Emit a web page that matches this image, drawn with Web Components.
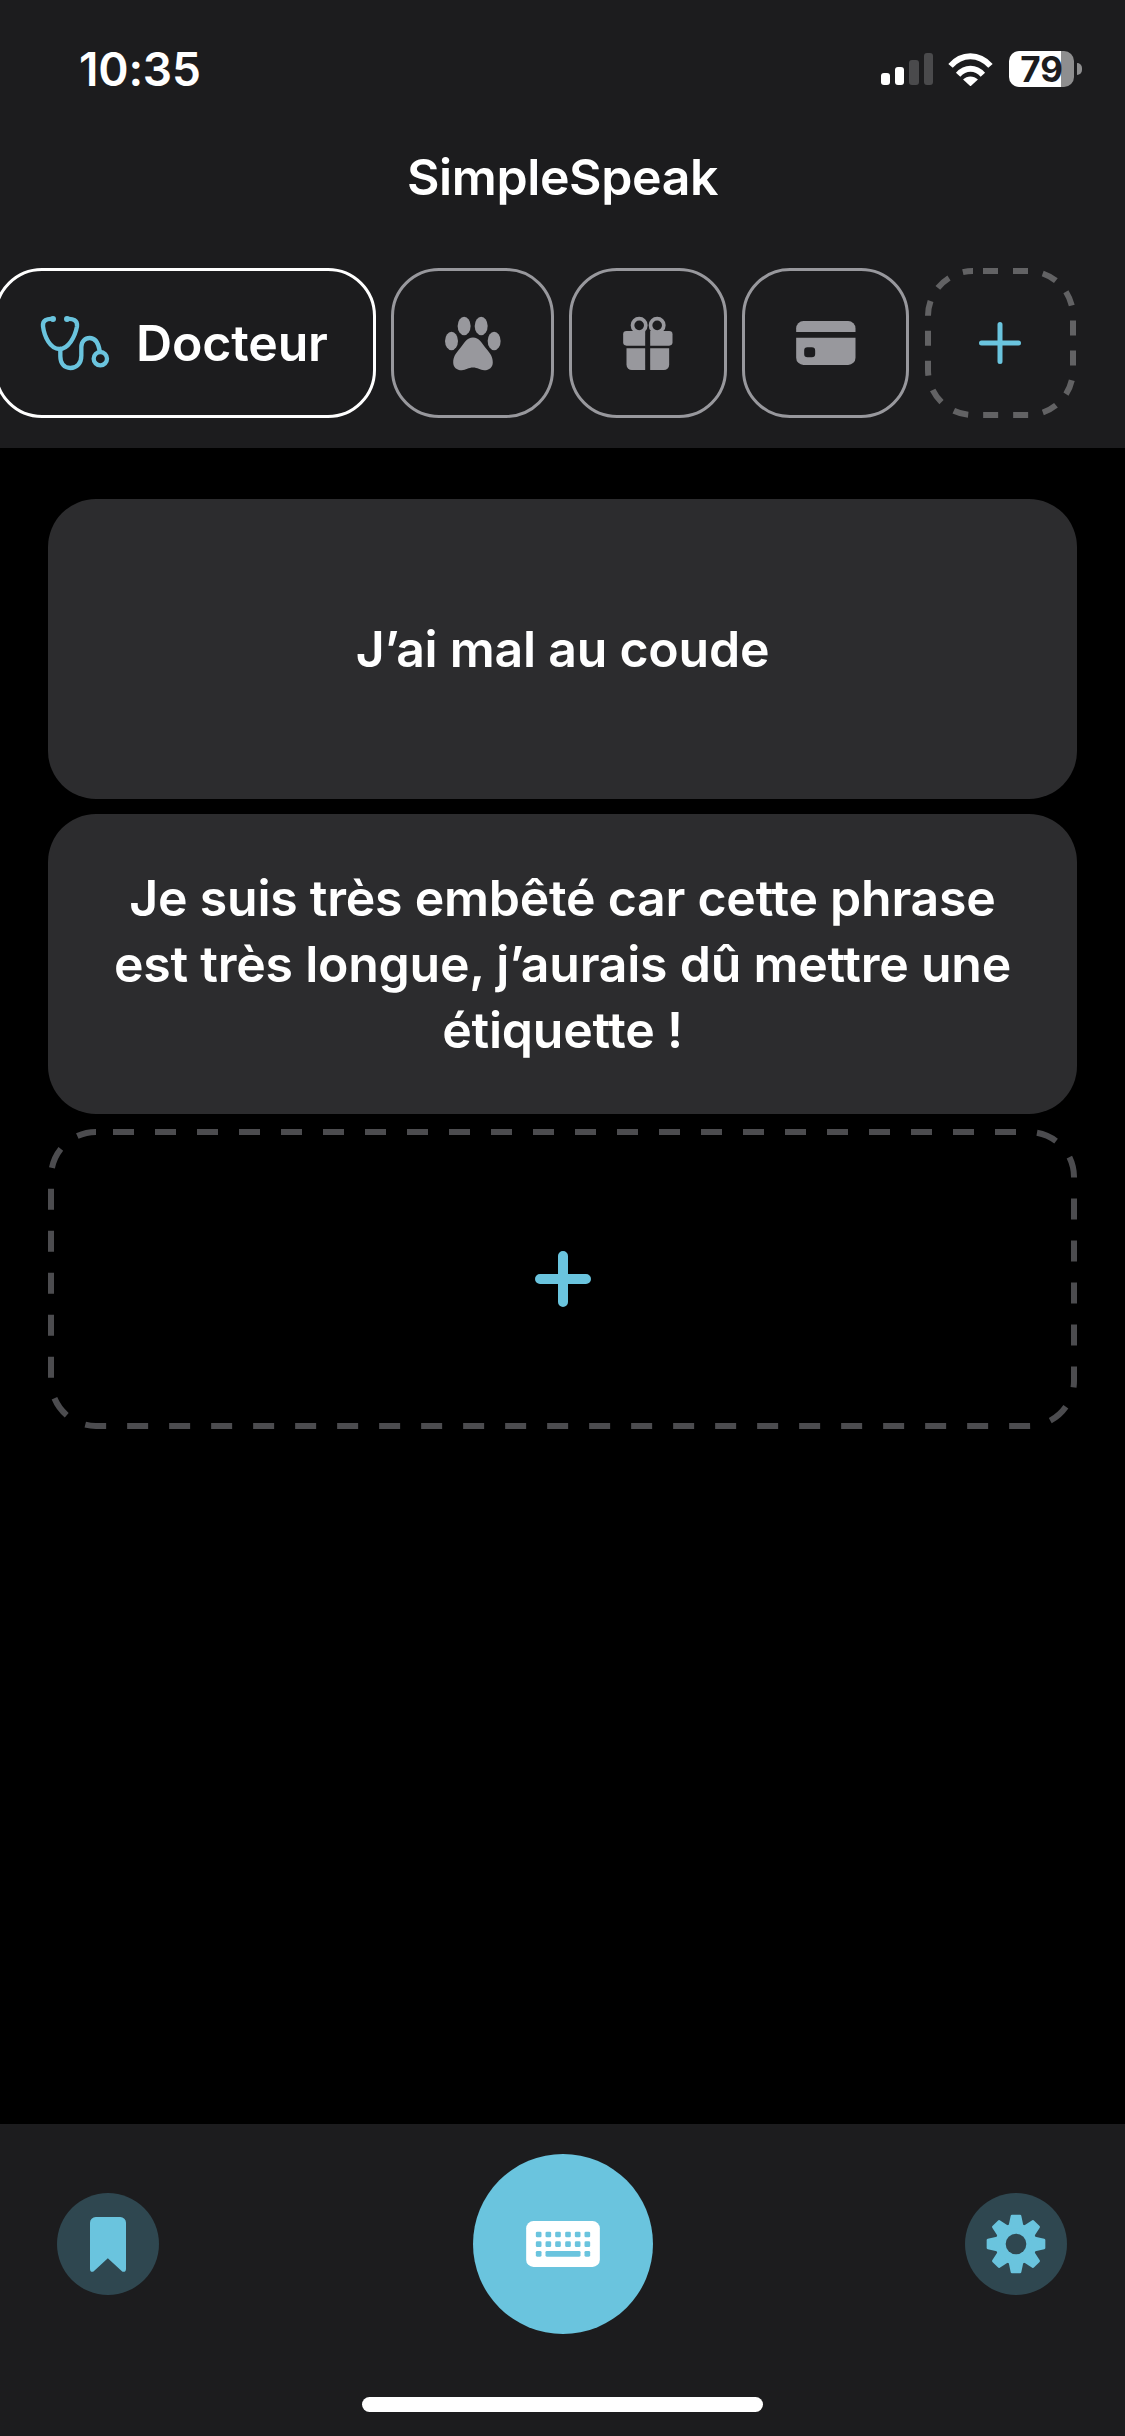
<!DOCTYPE html>
<html lang="fr">
<head>
<meta charset="utf-8">
<title>SimpleSpeak</title>
<style>
  html, body { margin: 0; padding: 0; background: #000; }
  body { width: 1125px; height: 2436px; overflow: hidden; font-family: Inter, "Liberation Sans", sans-serif; color: #fff; }
</style>
</head>
<body>
<speak-app>
  <app-header slot="header">
    <status-bar></status-bar>
    <tab-chip active style="width:382px">
      <svg slot="icon" width="75" height="60" viewBox="110 190 225 180" fill="none" stroke="#6ac4de" stroke-width="13" stroke-linecap="round"><path d="M158 208C140 206 126 212 128 230C132 262 150 298 177 298C204 298 224 262 230 230C232 212 218 206 200 208"/><path d="M180 298V320C180 342 192 355 210 355C230 355 243 340 243 318V292C243 276 254 265 268 265C284 265 294 280 298 303"/><circle cx="300" cy="327" r="20"/><circle cx="158" cy="208" r="5" fill="#6ac4de" stroke-width="8"/><circle cx="200" cy="208" r="5" fill="#6ac4de" stroke-width="8"/></svg>
      Docteur
    </tab-chip>
    <tab-chip style="width:163px">
      <svg slot="icon" width="58" height="57" viewBox="192 198 170 165" fill="#98989d"><ellipse cx="251" cy="229" rx="19" ry="27"/><ellipse cx="301" cy="229" rx="19" ry="27"/><ellipse cx="214" cy="273" rx="19" ry="27"/><ellipse cx="339" cy="273" rx="19" ry="27"/><path d="M277 263C295 263 303 280 316 296C328 310 335 320 335 336C335 350 325 359 310 359C298 359 290 351 277 351C264 351 256 359 244 359C229 359 219 350 219 336C219 320 226 310 238 296C251 280 259 263 277 263Z"/></svg>
    </tab-chip>
    <tab-chip style="width:158px">
      <svg slot="icon" width="50" height="54" viewBox="729 198 149 162" fill="#98989d"><circle cx="777" cy="226" r="20" fill="none" stroke="#98989d" stroke-width="11"/><circle cx="831" cy="226" r="20" fill="none" stroke="#98989d" stroke-width="11"/><path d="M739 243H795V287H739A10 10 0 0 1 729 277V253A10 10 0 0 1 739 243Z"/><path d="M810 243H867A10 10 0 0 1 877 253V277A10 10 0 0 1 867 287H810Z"/><path d="M739 295H795V360H755A16 16 0 0 1 739 344Z"/><path d="M810 295H867V344A16 16 0 0 1 851 360H810Z"/></svg>
    </tab-chip>
    <tab-chip style="width:167px">
      <svg slot="icon" width="60" height="44" viewBox="213 213 179 132" fill="#98989d"><path d="M213 246V235A22 22 0 0 1 235 213H369A22 22 0 0 1 391 235V246Z"/><path fill-rule="evenodd" d="M213 263H391V323A22 22 0 0 1 369 345H235A22 22 0 0 1 213 323ZM247 292A10 10 0 0 0 237 302V312A10 10 0 0 0 247 322H260A10 10 0 0 0 270 312V302A10 10 0 0 0 260 292Z"/></svg>
    </tab-chip>
    <dash-box class="add" w="151" h="150" dash="15" offset="20" sw="6" color="#626264">
      <svg style="margin-left:-1px" width="42" height="42" viewBox="0 0 42 42" stroke="#6ac4de" stroke-width="5" stroke-linecap="round"><path d="M21 2.500V39.500M2.500 21H39.500"/></svg>
    </dash-box>
  </app-header>

  <phrase-card>J’ai mal au coude</phrase-card>
  <phrase-card>Je suis très embêté car cette phrase est très longue, j’aurais dû mettre une étiquette !</phrase-card>
  <dash-box w="1029" h="300" dash="21" offset="25" sw="6" color="#4c4c4f">
    <svg width="56" height="56" viewBox="0 0 56 56" stroke="#6ac4de" stroke-width="10" stroke-linecap="round"><path d="M28 5V51M5 28H51"/></svg>
  </dash-box>

  <app-footer slot="footer">
    <round-button slot="left" size="102" bg="#2f4750">
      <svg width="36" height="55" viewBox="180 142 107 163" fill="#6ac4de"><path d="M197 142H270A17 17 0 0 1 287 159V296C287 305 279 307 274 302L233 264L192 302C187 307 180 305 180 296V159A17 17 0 0 1 197 142Z"/></svg>
    </round-button>
    <round-button slot="center" size="180" bg="#6ac4de">
      <svg width="74" height="46" viewBox="258 275 221 138"><rect x="258" y="275" width="221" height="138" rx="22" fill="#fff"/><g fill="#6ac4de"><rect x="287" y="307" width="17" height="17" rx="4"/><rect x="316" y="307" width="17" height="17" rx="4"/><rect x="345" y="307" width="17" height="17" rx="4"/><rect x="375" y="307" width="17" height="17" rx="4"/><rect x="404" y="307" width="17" height="17" rx="4"/><rect x="433" y="307" width="17" height="17" rx="4"/><rect x="287" y="336" width="17" height="17" rx="4"/><rect x="316" y="336" width="17" height="17" rx="4"/><rect x="345" y="336" width="17" height="17" rx="4"/><rect x="375" y="336" width="17" height="17" rx="4"/><rect x="404" y="336" width="17" height="17" rx="4"/><rect x="433" y="336" width="17" height="17" rx="4"/><rect x="287" y="365" width="17" height="17" rx="4"/><rect x="316" y="365" width="105" height="17" rx="4"/><rect x="433" y="365" width="17" height="17" rx="4"/></g></svg>
    </round-button>
    <round-button slot="right" size="102" bg="#2f4750">
      <gear-icon></gear-icon>
    </round-button>
  </app-footer>
</speak-app>

<script>
function shadow(el, html) { el.attachShadow({ mode: 'open' }).innerHTML = html; }

customElements.define('speak-app', class extends HTMLElement {
  constructor() { super(); shadow(this, `<style>
    :host { display:flex; flex-direction:column; width:1125px; height:2436px; background:#000; }
    main { flex:1; min-height:0; display:flex; flex-direction:column; gap:15px; padding:51px 48px 0; }
  </style><slot name="header"></slot><main><slot></slot></main><slot name="footer"></slot>`); }
});

customElements.define('app-header', class extends HTMLElement {
  constructor() { super(); shadow(this, `<style>
    :host { display:block; background:#1c1c1e; flex:none; }
    .title { height:78px; padding-bottom:2px; display:flex; align-items:center; justify-content:center; font-weight:600; font-size:50px; letter-spacing:-.4px; }
    .tabs { display:flex; gap:15px; margin-left:-6px; padding:50px 0 30px; width:1131px; box-sizing:border-box; }
    ::slotted(dash-box) { margin-left:1px; }
  </style><slot name="status"></slot><div class="title">SimpleSpeak</div><div class="tabs"><slot></slot></div>`); }
  connectedCallback() { const s = this.querySelector('status-bar'); if (s) s.slot = 'status'; }
});

customElements.define('status-bar', class extends HTMLElement {
  constructor() { super(); shadow(this, `<style>
    :host { display:flex; height:138px; align-items:center; box-sizing:border-box; padding:0 43px 0 79px; justify-content:space-between; color:#fff; }
    .time { font-weight:600; font-size:46px; letter-spacing:-.2px; }
    .right { display:flex; align-items:center; }
    .bars { display:flex; align-items:flex-end; gap:5px; height:32px; margin-right:15px; }
    .bars i { display:block; width:9px; border-radius:3px; background:#fff; }
    .bars i.off { background:#4a4a4c; }
    .wifi { margin-right:16px; display:block; }
    .batt { width:65px; height:36px; border-radius:10px; display:flex; align-items:center; justify-content:center; background:linear-gradient(90deg,#fff 52px,#8e8e8f 52px); color:#1c1c1e; font:700 35px Inter,"Liberation Sans",sans-serif; letter-spacing:-.2px; box-sizing:border-box; }
    .nub { width:5px; height:12px; margin-left:3px; border-radius:0 6px 6px 0; background:#8e8e8f; }
  </style>
  <div class="time">10:35</div>
  <div class="right">
    <div class="bars"><i style="height:12px"></i><i style="height:18px"></i><i class="off" style="height:25px;width:10px"></i><i class="off" style="height:32px"></i></div>
    <svg class="wifi" width="45" height="33" viewBox="295 66 135 100" fill="none" stroke="#fff" stroke-width="18"><path d="M302 105C336 66 388 66 423 105"/><path d="M325 132C347 108 378 108 400 132"/><path fill="#fff" stroke="none" d="M340 146C352 134 372 134 385 146L362.500 167Z"/></svg>
    <div class="batt">79</div><div class="nub"></div>
  </div>`); }
});

customElements.define('tab-chip', class extends HTMLElement {
  constructor() { super(); shadow(this, `<style>
    :host { display:flex; flex:none; align-items:center; justify-content:center; gap:24px; height:150px; box-sizing:border-box; border:3px solid #98989d; border-radius:48px; font-weight:600; font-size:50px; letter-spacing:-.15px; color:#fff; }
    :host([active]) { border-color:#fff; justify-content:flex-start; padding-left:40px; }
    ::slotted(svg) { display:block; flex:none; }
  </style><slot name="icon"></slot><slot></slot>`); }
});

customElements.define('phrase-card', class extends HTMLElement {
  constructor() { super(); shadow(this, `<style>
    :host { display:flex; flex:none; height:300px; box-sizing:border-box; padding:0 48px; align-items:center; justify-content:center; text-align:center; background:#2c2c2e; border-radius:48px; font-weight:600; font-size:50px; letter-spacing:-.24px; line-height:66px; color:#fff; }
  </style><div><slot></slot></div>`); }
});

customElements.define('dash-box', class extends HTMLElement {
  constructor() { super(); this.attachShadow({ mode: 'open' }); }
  connectedCallback() {
    const w = +this.getAttribute('w'), h = +this.getAttribute('h'), d = +this.getAttribute('dash'),
          o = +this.getAttribute('offset'), sw = +this.getAttribute('sw');
    const i = sw / 2;
    this.shadowRoot.innerHTML = `<style>
      :host { display:flex; flex:none; position:relative; align-items:center; justify-content:center; width:${w}px; height:${h}px; }
      .b { position:absolute; inset:0; }
      ::slotted(svg) { display:block; }
    </style><svg class="b" width="${w}" height="${h}" fill="none"><rect x="${i}" y="${i}" width="${w - sw}" height="${h - sw}" rx="45" stroke="${this.getAttribute('color')}" stroke-width="${sw}" stroke-dasharray="${d} ${d}" stroke-dashoffset="${o}"/></svg><slot></slot>`;
  }
});

customElements.define('app-footer', class extends HTMLElement {
  constructor() { super(); shadow(this, `<style>
    :host { display:block; flex:none; height:312px; box-sizing:border-box; background:#1c1c1e; padding-top:30px; }
    .row { display:grid; grid-template-columns:416px 180px 1fr; align-items:center; padding:0 58px 0 57px; height:180px; }
    .row div { display:flex; }
    .row div:last-child { justify-content:flex-end; }
    .home { width:401px; height:15px; border-radius:8px; background:#fff; margin:63px 0 0 362px; }
  </style><div class="row"><div><slot name="left"></slot></div><slot name="center"></slot><div><slot name="right"></slot></div></div><div class="home"></div>`); }
});

customElements.define('round-button', class extends HTMLElement {
  constructor() { super(); this.attachShadow({ mode: 'open' }); }
  connectedCallback() {
    const s = this.getAttribute('size');
    this.shadowRoot.innerHTML = `<style>
      :host { display:flex; align-items:center; justify-content:center; width:${s}px; height:${s}px; border-radius:50%; background:${this.getAttribute('bg')}; }
      ::slotted(*) { display:block; }
    </style><slot></slot>`;
  }
});

customElements.define('gear-icon', class extends HTMLElement {
  constructor() {
    super();
    let teeth = '';
    for (let a = 0; a < 360; a += 45) {
      teeth += `<path transform="rotate(${a})" d="M-19 -50L-12 -84H12L19 -50Z" stroke="#6ac4de" stroke-width="8" stroke-linejoin="round"/>`;
    }
    shadow(this, `<style>:host{display:block;width:60px;height:60px} svg{display:block}</style>
    <svg width="60" height="60" viewBox="-90 -90 180 180" fill="#6ac4de"><circle r="62"/>${teeth}<circle r="31" fill="#2f4750"/></svg>`);
  }
});
</script>
</body>
</html>
